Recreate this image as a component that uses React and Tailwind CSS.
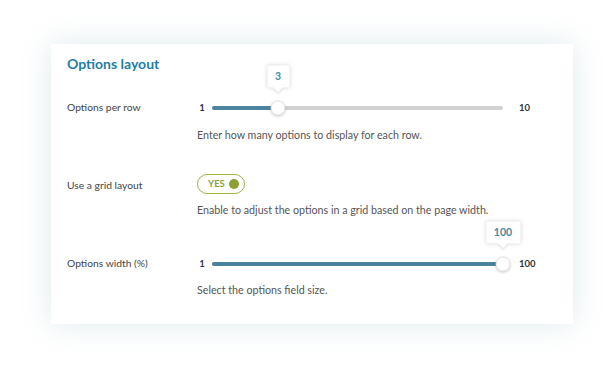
import React from "react";

function Tooltip({ value, w }) {
  return (
    <div className="absolute left-1/2 -translate-x-1/2 bottom-[25px] flex flex-col items-center">
      <div
        className={`${w} h-[22px] bg-white flex items-center justify-center text-[10.5px] font-bold text-[#4a8a9c] shadow-[0_0_4px_rgba(0,0,0,0.15)] rounded-[2px]`}
      >
        {value}
      </div>
      <div className="w-[7px] h-[7px] bg-white rotate-45 -mt-[4px] shadow-[2px_2px_2px_rgba(0,0,0,0.08)]" />
    </div>
  );
}

function Slider({ pct, value, max, tipW }) {
  return (
    <div className="flex items-center h-[16px]">
      <span className="w-[10px] text-center text-[9.5px] font-bold text-[#333]">1</span>
      <div className="ml-[5px] relative w-[291px] h-[4px] rounded-full bg-[#d2d2d2]">
        <div
          className="absolute left-0 top-0 h-[4px] rounded-full bg-[#4a84a0]"
          style={{ width: `${pct}%` }}
        />
        <div
          className="absolute top-1/2 -translate-y-1/2 -translate-x-1/2 w-[15px] h-[15px]"
          style={{ left: `${pct}%` }}
        >
          <div className="w-[15px] h-[15px] rounded-full bg-white border border-[#e4e4e4] shadow-[0_1px_3px_rgba(0,0,0,0.2)]" />
          <Tooltip value={value} w={tipW} />
        </div>
      </div>
      <span className="ml-[16px] text-[9.5px] font-bold text-[#333]">{max}</span>
    </div>
  );
}

export default function App() {
  return (
    <div
      className="w-[616px] h-[375px] bg-white overflow-hidden pt-[44px] pl-[51px]"
      style={{ fontFamily: "Lato, 'Open Sans', sans-serif" }}
    >
      <div className="w-[522px] h-[280px] bg-white shadow-[0_0_28px_rgba(110,160,175,0.22)] pl-[16px] pt-[11px]">
        <h2 className="text-[14px] leading-[18px] font-bold text-[#1f7ea5]">Options layout</h2>

        {/* Row 1 */}
        <div className="flex mt-[27px]">
          <div className="w-[130px] h-[16px] flex items-center text-[10.3px] text-[#444]">Options per row</div>
          <div className="flex flex-col">
            <Slider pct={22.7} value="3" max="10" tipW="w-[22px]" />
            <p className="mt-[12px] text-[10.7px] leading-[14px] text-[#555]">
              Enter how many options to display for each row.
            </p>
          </div>
        </div>

        {/* Row 2 */}
        <div className="flex mt-[32px]">
          <div className="w-[130px] h-[20px] pt-[4px] flex items-center text-[10.3px] text-[#444]">Use a grid layout</div>
          <div className="flex flex-col">
            <div className="w-[48px] h-[20px] rounded-full border-[1.5px] border-[#a3b443] flex items-center justify-between pl-[10px] pr-[5px]">
              <span className="text-[9.5px] font-bold text-[#8ea23a] leading-none">YES</span>
              <span className="w-[10px] h-[10px] rounded-full bg-[#8aa232]" />
            </div>
            <p className="mt-[9px] text-[10.7px] leading-[14px] text-[#555]">
              Enable to adjust the options in a grid based on the page width.
            </p>
          </div>
        </div>

        {/* Row 3 */}
        <div className="flex mt-[39px]">
          <div className="w-[130px] h-[16px] flex items-center text-[10.3px] text-[#444]">Options width (%)</div>
          <div className="flex flex-col">
            <Slider pct={100} value="100" max="100" tipW="w-[34px]" />
            <p className="mt-[11px] text-[10.7px] leading-[14px] text-[#555]">
              Select the options field size.
            </p>
          </div>
        </div>
      </div>
    </div>
  );
}
